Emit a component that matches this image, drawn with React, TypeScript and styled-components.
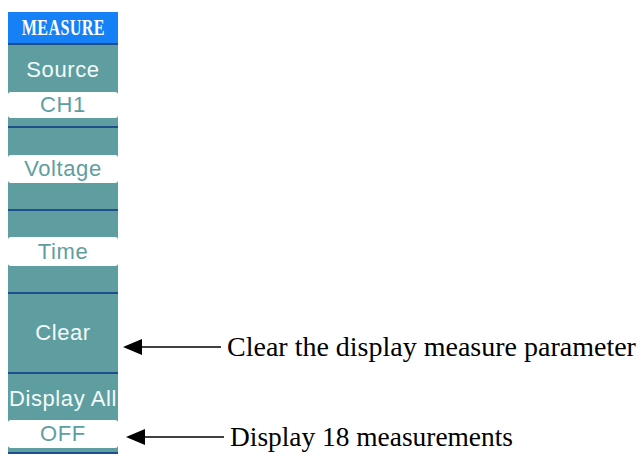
import React from 'react'
import styled, { createGlobalStyle } from 'styled-components'

const GlobalStyle = createGlobalStyle`
    html, body {
        margin: 0;
        padding: 0;
        background: #ffffff;
    }
`

const TEAL = '#5f9ea0'
const NAVY = '#1d4f8c'

const Figure = styled.div`
    display: flex;
    flex-direction: column;
    padding: 12px 0 0 8px;
    width: 633px;
    height: 444px;
    overflow: hidden;
`

const MenuTitle = styled.div`
    width: 110px;
    height: 31px;
    background-color: #1680f6;
    border-bottom: 2px solid ${NAVY};
    display: flex;
    align-items: center;
    justify-content: center;
    color: #ffffff;
    font-family: "Liberation Serif", serif;
    font-weight: bold;
    font-size: 23px;
    span {
        display: inline-block;
        transform: scaleX(0.7);
        letter-spacing: 0.5px;
    }
`

const Row = styled.div`
    display: flex;
    align-items: flex-start;
`

const Softkey = styled.div<{ $h: number }>`
    width: 110px;
    height: ${p => p.$h}px;
    box-sizing: border-box;
    background-color: ${TEAL};
    border-bottom: 2px solid ${NAVY};
    display: flex;
    flex-direction: column;
    flex-shrink: 0;
`

const Label = styled.div<{ $h: number; $pt?: number }>`
    height: ${p => p.$h}px;
    box-sizing: border-box;
    padding-top: ${p => p.$pt ?? 0}px;
    display: flex;
    align-items: center;
    justify-content: center;
    color: #f4fbfb;
    font-family: "Liberation Sans", Arial, sans-serif;
    font-size: 22px;
    letter-spacing: 0.6px;
    white-space: nowrap;
`

const Value = styled.div<{ $mt?: number; $h: number }>`
    margin-top: ${p => p.$mt ?? 0}px;
    height: ${p => p.$h}px;
    background-color: #ffffff;
    border-radius: 3px;
    display: flex;
    align-items: center;
    justify-content: center;
    color: ${TEAL};
    font-family: "Liberation Sans", Arial, sans-serif;
    font-size: 22px;
    letter-spacing: 0.6px;
`

const Callout = styled.div<{ $top: number; $ml: number; $size: number }>`
    display: flex;
    align-items: center;
    height: 32px;
    margin-top: ${p => p.$top}px;
    margin-left: ${p => p.$ml}px;
    gap: 6px;
    font-family: "Liberation Serif", "Times New Roman", serif;
    font-size: ${p => p.$size}px;
    color: #000000;
    white-space: nowrap;
`

function Arrow() {
    return (
        <svg width="98" height="20" viewBox="0 0 98 20">
            <line x1="16" y1="10" x2="98" y2="10" stroke="#000" strokeWidth="1.6" />
            <polygon points="0,10 19,2 19,18" fill="#000" />
        </svg>
    )
}

export default function App() {
    return (
        <>
            <GlobalStyle />
            <Figure>
                <MenuTitle><span>MEASURE</span></MenuTitle>
                <Row>
                    <Softkey $h={83}>
                        <Label $h={47} $pt={2}>Source</Label>
                        <Value $h={26}>CH1</Value>
                    </Softkey>
                </Row>
                <Row>
                    <Softkey $h={83}>
                        <Value $mt={27} $h={28}>Voltage</Value>
                    </Softkey>
                </Row>
                <Row>
                    <Softkey $h={83}>
                        <Value $mt={26} $h={29}>Time</Value>
                    </Softkey>
                </Row>
                <Row>
                    <Softkey $h={80}>
                        <Label $h={78}>Clear</Label>
                    </Softkey>
                    <Callout $top={37} $ml={5} $size={28}>
                        <Arrow />
                        <span>Clear the display measure parameter</span>
                    </Callout>
                </Row>
                <Row>
                    <Softkey $h={80}>
                        <Label $h={46} $pt={4}>Display All</Label>
                        <Value $h={28}>OFF</Value>
                    </Softkey>
                    <Callout $top={47} $ml={8} $size={27.4}>
                        <Arrow />
                        <span>Display 18 measurements</span>
                    </Callout>
                </Row>
            </Figure>
        </>
    )
}
